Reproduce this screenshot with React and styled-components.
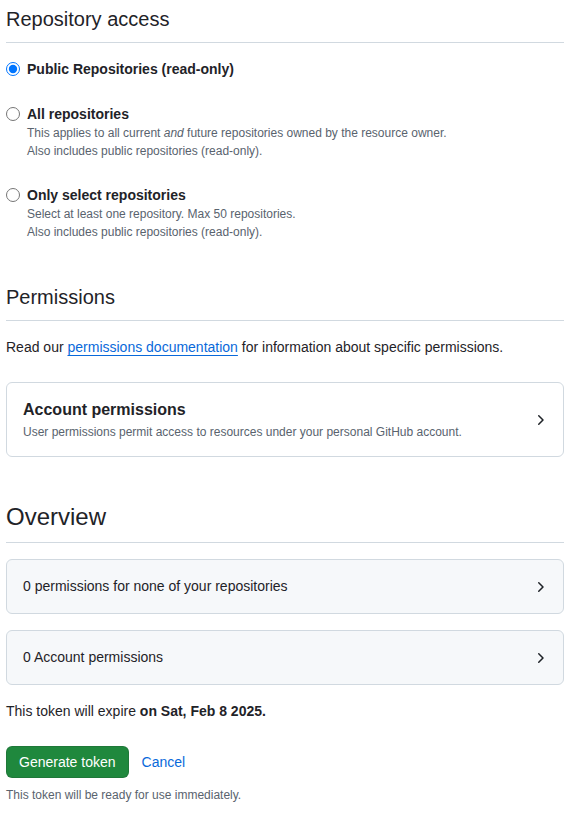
import styled, { createGlobalStyle } from "styled-components";

const GlobalStyle = createGlobalStyle`
  body {
    margin: 0;
    background: #fff;
    color: #1f2328;
    font-family: "Liberation Sans", Arial, sans-serif;
    font-size: 14px;
    line-height: 20px;
  }
`;

const Page = styled.div`
  padding: 4px 9px 0 6px;
`;

const Subhead = styled.div`
  padding-bottom: 8px;
  border-bottom: 1px solid #d1d9e0;
  margin-top: ${(p) => p.$top || 0}px;
`;

const Heading = styled.h2`
  margin: 0;
  font-weight: 400;
  font-size: ${(p) => (p.$large ? 24 : 20)}px;
  line-height: ${(p) => (p.$large ? 34 : 30)}px;
`;

const RadioList = styled.div`
  display: flex;
  flex-direction: column;
  gap: 25px;
  padding-top: 16px;
`;

const RadioRow = styled.label`
  display: grid;
  grid-template-columns: 14px 1fr;
  column-gap: 7px;
  align-items: center;
`;

const Radio = styled.input`
  margin: 0;
  width: 14px;
  height: 14px;
`;

const RadioLabel = styled.span`
  font-weight: 700;
`;

const Note = styled.div`
  grid-column: 2;
  font-size: 12px;
  line-height: 18px;
  color: #59636e;
`;

const Para = styled.p`
  margin: 16px 0 0;
`;

const Link = styled.a`
  color: #0969da;
  text-decoration: underline;
  text-underline-offset: 3px;
`;

const Card = styled.div`
  display: flex;
  align-items: center;
  justify-content: space-between;
  margin-top: ${(p) => p.$top || 16}px;
  padding: ${(p) => (p.$muted ? "16px 15px 16px 16px" : "16px 15px 15px 16px")};
  border: 1px solid #d1d9e0;
  border-radius: 6px;
  background: ${(p) => (p.$muted ? "#f6f8fa" : "#fff")};
  line-height: 21px;
`;

const CardTitle = styled.div`
  font-size: 16px;
  font-weight: 700;
  line-height: 22px;
`;

const CardNote = styled.div`
  margin-top: 2px;
  font-size: 12px;
  line-height: 18px;
  color: #59636e;
`;

const Actions = styled.div`
  display: flex;
  align-items: center;
  gap: 13px;
  margin-top: 25px;
`;

const PrimaryButton = styled.button`
  height: 32px;
  padding: 0 12px;
  border: 1px solid rgba(31, 35, 40, 0.15);
  border-radius: 6px;
  background: #1f883d;
  color: #fff;
  font-family: inherit;
  font-size: 14px;
`;

const TextButton = styled.button`
  padding: 0;
  border: 0;
  background: none;
  color: #0969da;
  font-family: inherit;
  font-size: 14px;
`;

const Hint = styled.div`
  margin-top: 8px;
  font-size: 12px;
  line-height: 18px;
  color: #59636e;
`;

const Chevron = () => (
  <svg width="16" height="16" viewBox="0 0 16 16" fill="#1f2328">
    <path d="M6.22 3.22a.75.75 0 0 1 1.06 0l4.25 4.25a.75.75 0 0 1 0 1.06l-4.25 4.25a.751.751 0 0 1-1.042-.018.751.751 0 0 1-.018-1.042L9.94 8 6.22 4.28a.75.75 0 0 1 0-1.06Z" />
  </svg>
);

const options = [
  { id: "public", label: "Public Repositories (read-only)", checked: true },
  {
    id: "all",
    label: "All repositories",
    notes: [
      <>This applies to all current <em>and</em> future repositories owned by the resource owner.</>,
      "Also includes public repositories (read-only).",
    ],
  },
  {
    id: "select",
    label: "Only select repositories",
    notes: [
      "Select at least one repository. Max 50 repositories.",
      "Also includes public repositories (read-only).",
    ],
  },
];

export default function App() {
  return (
    <Page>
      <GlobalStyle />
      <Subhead>
        <Heading>Repository access</Heading>
      </Subhead>
      <RadioList>
        {options.map((o) => (
          <RadioRow key={o.id}>
            <Radio type="radio" name="access" defaultChecked={o.checked} />
            <RadioLabel>{o.label}</RadioLabel>
            {o.notes && o.notes.map((n, i) => <Note key={i}>{n}</Note>)}
          </RadioRow>
        ))}
      </RadioList>

      <Subhead $top={41}>
        <Heading>Permissions</Heading>
      </Subhead>
      <Para>
        Read our <Link href="#">permissions documentation</Link> for information about specific permissions.
      </Para>
      <Card $top={25}>
        <div>
          <CardTitle>Account permissions</CardTitle>
          <CardNote>User permissions permit access to resources under your personal GitHub account.</CardNote>
        </div>
        <Chevron />
      </Card>

      <Subhead $top={43}>
        <Heading $large>Overview</Heading>
      </Subhead>
      <Card $muted>
        <span>0 permissions for none of your repositories</span>
        <Chevron />
      </Card>
      <Card $muted>
        <span>0 Account permissions</span>
        <Chevron />
      </Card>

      <Para>
        This token will expire <strong>on Sat, Feb 8 2025.</strong>
      </Para>
      <Actions>
        <PrimaryButton>Generate token</PrimaryButton>
        <TextButton>Cancel</TextButton>
      </Actions>
      <Hint>This token will be ready for use immediately.</Hint>
    </Page>
  );
}
